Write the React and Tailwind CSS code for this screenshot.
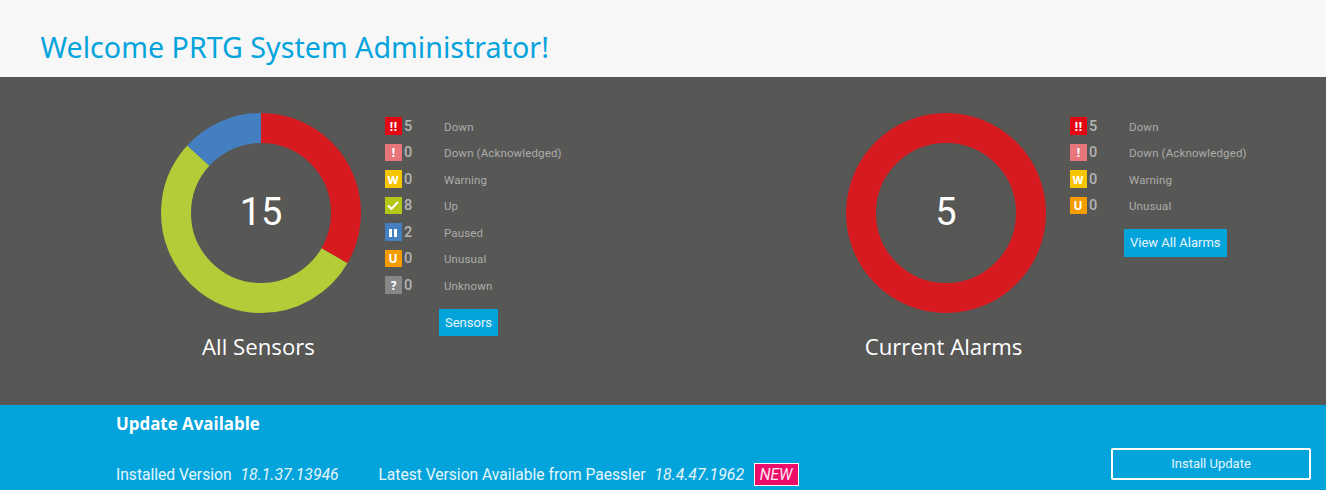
import React from "react";

const glyph = "font-['Noto_Sans',sans-serif] font-bold text-white leading-none";

const KINDS = {
  down: {
    label: "Down",
    bg: "bg-[#e30613]",
    mark: <span className={`${glyph} pl-[0.6px] pt-px text-[12px] tracking-[0.6px]`}>!!</span>,
  },
  ack: {
    label: "Down (Acknowledged)",
    bg: "bg-[#e77579]",
    mark: <span className={`${glyph} pt-px text-[12px]`}>!</span>,
  },
  warning: {
    label: "Warning",
    bg: "bg-[#f5c500]",
    mark: <span className={`${glyph} pr-px pt-px text-[11px] font-extrabold`}>W</span>,
  },
  up: {
    label: "Up",
    bg: "bg-[#b4c718]",
    mark: (
      <svg className="-ml-px" width="12" height="10" viewBox="0 0 12 10" fill="none">
        <path d="M1 4.4 4.4 7.8 11 1" stroke="#fff" strokeWidth="2.1" />
      </svg>
    ),
  },
  paused: {
    label: "Paused",
    bg: "bg-[#447fc1]",
    mark: (
      <svg className="-ml-px mt-px" width="8" height="8" viewBox="0 0 8 8" fill="#fff">
        <rect x="0" y="0" width="3" height="8" />
        <rect x="5" y="0" width="3" height="8" />
      </svg>
    ),
  },
  unusual: {
    label: "Unusual",
    bg: "bg-[#f59c00]",
    mark: <span className={`${glyph} pr-px pt-px text-[12px]`}>U</span>,
  },
  unknown: {
    label: "Unknown",
    bg: "bg-[#878787]",
    mark: <span className={`${glyph} pt-px text-[12px]`}>?</span>,
  },
};

function Row({ kind, count }) {
  const { label, bg, mark } = KINDS[kind];
  return (
    <li className="flex h-[26.5px] items-start">
      <span className={`flex h-[17.5px] w-[17px] items-center justify-center pt-px ${bg}`}>{mark}</span>
      <span className="ml-[2px] w-[40px] pt-[0.5px] text-[14.5px] font-medium leading-[18px] text-[#b4b4b4]">
        {count}
      </span>
      <span className="pt-[0.5px] text-[11.5px] leading-[18px] tracking-[0.13px] text-[#acacac]">{label}</span>
    </li>
  );
}

function Donut({ segments, total }) {
  const circumference = 2 * Math.PI * 85;
  let start = 0;
  return (
    <div className="grid size-[200px] place-items-center">
      <svg className="col-start-1 row-start-1 -rotate-90" width="200" height="200" viewBox="0 0 200 200" fill="none">
        {segments.map(({ value, color }) => {
          const length = (value / total) * circumference;
          const offset = -start;
          start += length;
          return (
            <circle
              key={color}
              cx="100"
              cy="100"
              r="85"
              stroke={color}
              strokeWidth="30"
              strokeDasharray={`${length} ${circumference - length}`}
              strokeDashoffset={offset}
            />
          );
        })}
      </svg>
      <span className="col-start-1 row-start-1 pb-[3px] text-[38px] font-normal leading-none text-white">{total}</span>
    </div>
  );
}

function Panel({ title, total, segments, rows, action }) {
  return (
    <section className="flex w-[685px] shrink-0 items-start pl-[161px]">
      <div className="w-[200px]">
        <Donut segments={segments} total={total} />
        <h2 className="mt-[18px] pr-[5px] text-center font-['Open_Sans',sans-serif] text-[22.2px] leading-8 text-white">
          {title}
        </h2>
      </div>
      <div className="ml-6 pt-1">
        <ul>
          {rows.map(([kind, count]) => (
            <Row key={kind} kind={kind} count={count} />
          ))}
        </ul>
        <button className="ml-[54px] mt-[6px] h-[27.5px] bg-[#03a3dc] px-[6px] text-[13px] leading-none text-white/90">
          {action}
        </button>
      </div>
    </section>
  );
}

export default function App() {
  return (
    <div className="flex h-[490px] w-[1326px] flex-col overflow-hidden font-[Roboto,sans-serif]">
      <header className="h-[77px] shrink-0 bg-[#f7f7f7] pl-[40.5px] pt-[27px]">
        <h1 className="font-['Noto_Sans',sans-serif] text-[28.65px] leading-10 text-[#03a3dc]">
          Welcome PRTG System Administrator!
        </h1>
      </header>

      <main className="flex h-[328px] shrink-0 overflow-hidden bg-[#575755] pt-9">
        <Panel
          title="All Sensors"
          total={15}
          action="Sensors"
          segments={[
            { value: 5, color: "#d71920" },
            { value: 8, color: "#b4cc38" },
            { value: 2, color: "#447fc1" },
          ]}
          rows={[
            ["down", 5],
            ["ack", 0],
            ["warning", 0],
            ["up", 8],
            ["paused", 2],
            ["unusual", 0],
            ["unknown", 0],
          ]}
        />
        <Panel
          title="Current Alarms"
          total={5}
          action="View All Alarms"
          segments={[{ value: 5, color: "#d71920" }]}
          rows={[
            ["down", 5],
            ["ack", 0],
            ["warning", 0],
            ["unusual", 0],
          ]}
        />
      </main>

      <footer className="flex h-[85px] shrink-0 justify-between bg-[#03a3dc] pl-[116px] pr-[15px] text-white">
        <div className="pt-[7px]">
          <h3 className="font-['Open_Sans',sans-serif] text-[16.9px] font-bold leading-6">Update Available</h3>
          <p className="mt-[27px] flex h-6 items-center whitespace-nowrap text-[15.6px] leading-6 text-white/90">
            <span>Installed Version</span>
            <em className="ml-[9px] text-[15.8px]">18.1.37.13946</em>
            <span className="ml-[39.7px]">Latest Version Available from Paessler</span>
            <em className="ml-[9px] text-[15.8px]">18.4.47.1962</em>
            <em className="mb-[2px] ml-[10px] flex h-[23px] w-[45px] items-center justify-center border border-white bg-[#ee0c6a] pr-px pt-[2px]">
              NEW
            </em>
          </p>
        </div>
        <button className="mt-[43px] h-8 w-[200px] rounded-[2px] border-2 border-white pb-[2px] text-[13px] leading-none text-white/90">
          Install Update
        </button>
      </footer>
    </div>
  );
}
